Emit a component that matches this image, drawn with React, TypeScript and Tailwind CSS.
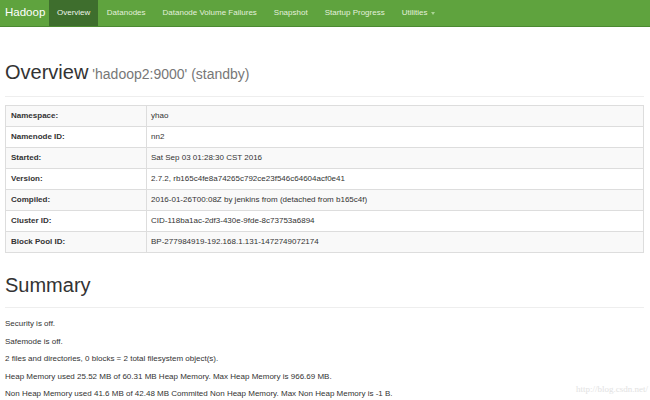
const navItems = ["Datanodes", "Datanode Volume Failures", "Snapshot", "Startup Progress"];

const overviewRows: [string, string][] = [
  ["Namespace:", "yhao"],
  ["Namenode ID:", "nn2"],
  ["Started:", "Sat Sep 03 01:28:30 CST 2016"],
  ["Version:", "2.7.2, rb165c4fe8a74265c792ce23f546c64604acf0e41"],
  ["Compiled:", "2016-01-26T00:08Z by jenkins from (detached from b165c4f)"],
  ["Cluster ID:", "CID-118ba1ac-2df3-430e-9fde-8c73753a6894"],
  ["Block Pool ID:", "BP-277984919-192.168.1.131-1472749072174"],
];

const summaryLines = [
  "Security is off.",
  "Safemode is off.",
  "2 files and directories, 0 blocks = 2 total filesystem object(s).",
  "Heap Memory used 25.52 MB of 60.31 MB Heap Memory. Max Heap Memory is 966.69 MB.",
  "Non Heap Memory used 41.6 MB of 42.48 MB Commited Non Heap Memory. Max Non Heap Memory is -1 B.",
];

function Navbar() {
  return (
    <nav className="flex h-[27px] items-stretch border-b border-[#4b8a31] bg-[#5fa33e] text-[8px]">
      <div className="flex w-[49px] items-center pl-[5px] text-[11.5px] text-white">Hadoop</div>
      <div className="flex items-center bg-[#3e6e2d] px-[8px] text-[#eef5ea]">Overview</div>
      {navItems.map((item) => (
        <div key={item} className="flex items-center px-[8.5px] text-[#e3f0dc]">
          {item}
        </div>
      ))}
      <div className="flex items-center gap-[4px] px-[8.5px] text-[#e3f0dc]">
        Utilities
        <span className="mt-[1px] h-0 w-0 border-x-[2.5px] border-t-[3px] border-x-transparent border-t-[#a9d394]" />
      </div>
    </nav>
  );
}

function PageHeader({ title, sub }: { title: string; sub?: string }) {
  return (
    <div className="border-b border-[#eeeeee] pb-[11px]">
      <h1 className="text-[20px] leading-[22px] text-[#333]">
        {title}
        {sub && <span className="ml-[4px] text-[14px] text-[#777]">{sub}</span>}
      </h1>
    </div>
  );
}

export default function App() {
  return (
    <div className="relative h-[400px] w-[650px] overflow-hidden bg-white font-['Liberation_Sans',Arial,sans-serif] text-[#333]">
      <Navbar />
      <div className="pl-[5px] pr-[6px]">
        <div className="mt-[34px]">
          <PageHeader title="Overview" sub="'hadoop2:9000' (standby)" />
        </div>

        <div className="mt-[8px] border border-[#dddddd] text-[8px]">
          {overviewRows.map(([label, value], i) => (
            <div
              key={label}
              className={`flex h-[21px] items-center border-b border-[#dddddd] last:h-[20px] last:border-b-0 ${
                i % 2 === 0 ? "bg-[#f9f9f9]" : "bg-white"
              }`}
            >
              <div className="flex h-full w-[141px] items-center border-r border-[#dddddd] pl-[5px] font-bold">
                {label}
              </div>
              <div className="pl-[4px]">{value}</div>
            </div>
          ))}
        </div>

        <div className="mt-[21px]">
          <PageHeader title="Summary" />
        </div>

        <div className="mt-[10px] text-[8px] leading-[11px]">
          {summaryLines.map((line) => (
            <p key={line} className="mb-[6.5px]">
              {line}
            </p>
          ))}
        </div>
      </div>

      <div className="absolute bottom-[4px] right-[2px] font-['Liberation_Serif',serif] text-[9px] text-[#e2e2e2]">
        http://blog.csdn.net/
      </div>
    </div>
  );
}
